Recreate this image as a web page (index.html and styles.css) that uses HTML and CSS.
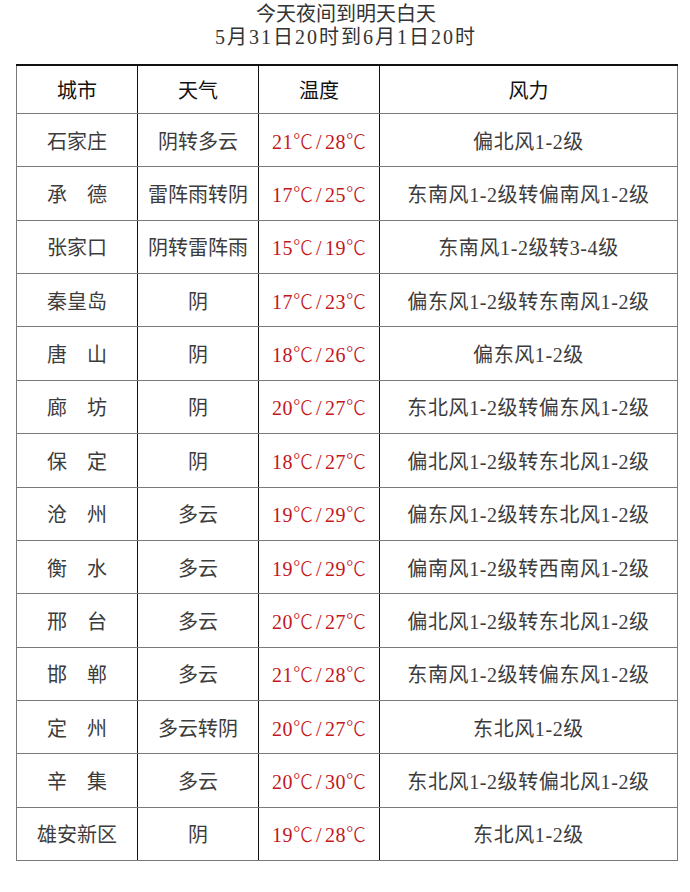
FILE: index.html
```html
<!DOCTYPE html>
<html lang="zh-CN">
<head>
<meta charset="utf-8">
<title>今天夜间到明天白天</title>
<link rel="stylesheet" href="styles.css">
</head>
<body>
<div class="page">
  <div class="title">
    <div>今天夜间到明天白天</div>
    <div class="title-date">5月31日20时到6月1日20时</div>
  </div>
  <table class="forecast">
    <colgroup>
      <col class="c-city"><col class="c-weather"><col class="c-temp"><col class="c-wind">
    </colgroup>
    <thead>
      <tr><th>城市</th><th>天气</th><th>温度</th><th>风力</th></tr>
    </thead>
    <tbody>
      <tr><td>石家庄</td><td>阴转多云</td><td class="temp">21<span class="deg">℃</span><span class="sl">/</span>28<span class="deg">℃</span></td><td class="wind">偏北风1-2级</td></tr>
      <tr><td>承　德</td><td>雷阵雨转阴</td><td class="temp">17<span class="deg">℃</span><span class="sl">/</span>25<span class="deg">℃</span></td><td class="wind">东南风1-2级转偏南风1-2级</td></tr>
      <tr><td>张家口</td><td>阴转雷阵雨</td><td class="temp">15<span class="deg">℃</span><span class="sl">/</span>19<span class="deg">℃</span></td><td class="wind">东南风1-2级转3-4级</td></tr>
      <tr><td>秦皇岛</td><td>阴</td><td class="temp">17<span class="deg">℃</span><span class="sl">/</span>23<span class="deg">℃</span></td><td class="wind">偏东风1-2级转东南风1-2级</td></tr>
      <tr><td>唐　山</td><td>阴</td><td class="temp">18<span class="deg">℃</span><span class="sl">/</span>26<span class="deg">℃</span></td><td class="wind">偏东风1-2级</td></tr>
      <tr><td>廊　坊</td><td>阴</td><td class="temp">20<span class="deg">℃</span><span class="sl">/</span>27<span class="deg">℃</span></td><td class="wind">东北风1-2级转偏东风1-2级</td></tr>
      <tr><td>保　定</td><td>阴</td><td class="temp">18<span class="deg">℃</span><span class="sl">/</span>27<span class="deg">℃</span></td><td class="wind">偏北风1-2级转东北风1-2级</td></tr>
      <tr><td>沧　州</td><td>多云</td><td class="temp">19<span class="deg">℃</span><span class="sl">/</span>29<span class="deg">℃</span></td><td class="wind">偏东风1-2级转东北风1-2级</td></tr>
      <tr><td>衡　水</td><td>多云</td><td class="temp">19<span class="deg">℃</span><span class="sl">/</span>29<span class="deg">℃</span></td><td class="wind">偏南风1-2级转西南风1-2级</td></tr>
      <tr><td>邢　台</td><td>多云</td><td class="temp">20<span class="deg">℃</span><span class="sl">/</span>27<span class="deg">℃</span></td><td class="wind">偏北风1-2级转东北风1-2级</td></tr>
      <tr><td>邯　郸</td><td>多云</td><td class="temp">21<span class="deg">℃</span><span class="sl">/</span>28<span class="deg">℃</span></td><td class="wind">东南风1-2级转偏东风1-2级</td></tr>
      <tr><td>定　州</td><td>多云转阴</td><td class="temp">20<span class="deg">℃</span><span class="sl">/</span>27<span class="deg">℃</span></td><td class="wind">东北风1-2级</td></tr>
      <tr><td>辛　集</td><td>多云</td><td class="temp">20<span class="deg">℃</span><span class="sl">/</span>30<span class="deg">℃</span></td><td class="wind">东北风1-2级转偏北风1-2级</td></tr>
      <tr><td>雄安新区</td><td>阴</td><td class="temp">19<span class="deg">℃</span><span class="sl">/</span>28<span class="deg">℃</span></td><td class="wind">东北风1-2级</td></tr>
    </tbody>
  </table>
</div>
</body>
</html>
```
FILE: styles.css
```css
html, body {
  margin: 0;
  padding: 0;
  background: #ffffff;
}

body {
  font-family: "Liberation Serif", "Noto Sans CJK SC", serif;
  color: #3c3c3c;
}

.page {
  width: 690px;
  height: 892px;
  padding-top: 3px;
  box-sizing: border-box;
}

.title {
  text-align: center;
  font-size: 20px;
  line-height: 23px;
  color: #333;
  padding-left: 2px;
}

.title-date {
  letter-spacing: 2px;
}

.forecast {
  margin: 15px 0 0 16px;
  width: 661px;
  border-collapse: collapse;
  table-layout: fixed;
  font-size: 20px;
}

.c-city, .c-weather, .c-temp { width: 121px; }
.c-wind { width: 298px; }

.forecast th,
.forecast td {
  padding: 0;
  text-align: center;
  font-weight: normal;
  white-space: nowrap;
  border-top: 1px solid #7a7a7a;
  border-bottom: 1px solid #7a7a7a;
  border-left: 1px solid #111;
  border-right: 1px solid #111;
}

.forecast th {
  height: 47px;
  color: #111;
  border-top: 2px solid #111;
}

.forecast td {
  height: 52.36px;
}

.forecast th:first-child,
.forecast td:first-child {
  border-left: 1px solid #7a7a7a;
}

.forecast th:last-child,
.forecast td:last-child {
  border-right: 1px solid #7a7a7a;
}

.forecast .temp {
  color: #c4161c;
  letter-spacing: 0.5px;
}

.forecast .deg {
  font-family: "Noto Sans CJK SC", sans-serif;
  font-weight: 300;
  letter-spacing: 0;
}

.forecast .sl {
  display: inline-block;
  margin: 0 3px;
}

.forecast .wind {
  letter-spacing: 0.6px;
}
```
